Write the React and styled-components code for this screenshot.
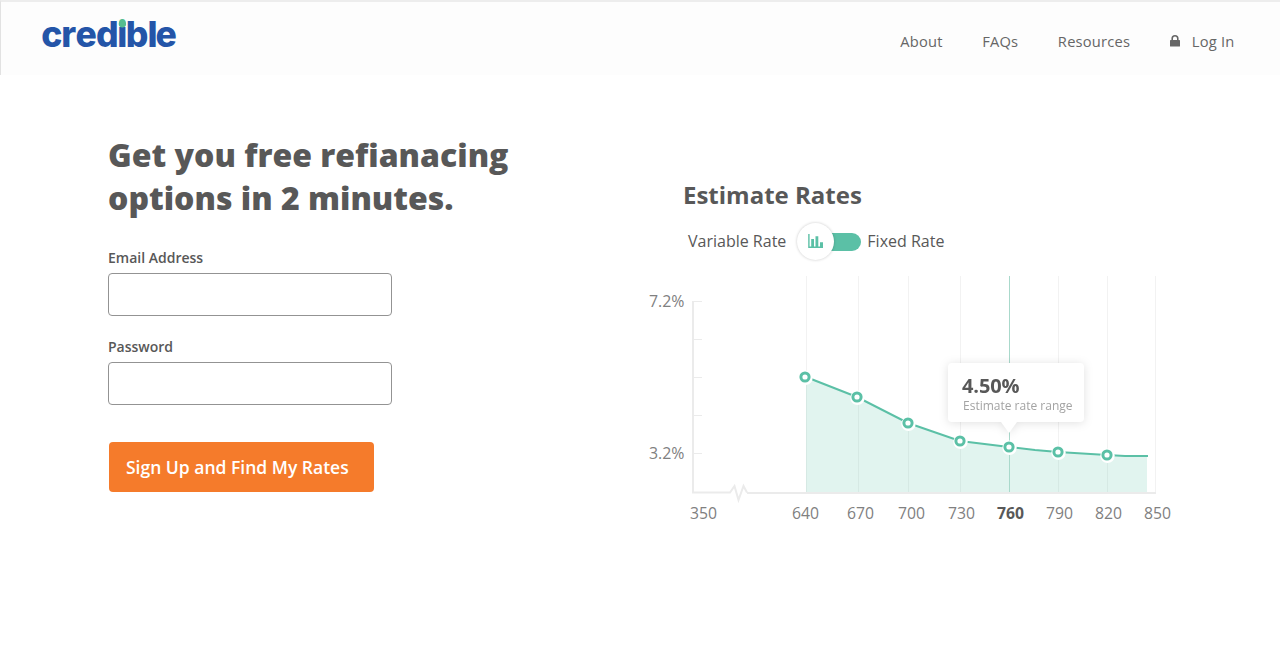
import React from "react";
import styled, { createGlobalStyle } from "styled-components";

const GlobalStyle = createGlobalStyle`
  * { box-sizing: border-box; }
  body { margin: 0; background: #fff; color: #585858; font-family: "Open Sans", sans-serif; }
`;

const Page = styled.div`
  height: 672px;
  overflow: hidden;
`;

const Header = styled.header`
  height: 75px;
  display: flex;
  justify-content: space-between;
  padding: 0 45.5px 0 41px;
  background: #fdfdfd;
  border-top: 2px solid #ededed;
  border-left: 1px solid #e2e2e2;
`;

const Logo = styled.svg`
  display: block;
  width: 150px;
  height: 60px;
  font: 800 35.5px Inter, sans-serif;
`;

const Nav = styled.nav`
  display: flex;
  height: 78px;
  align-items: center;
  gap: 39.5px;
`;

const NavLink = styled.a`
  display: flex;
  align-items: center;
  font-size: 14.7px;
  letter-spacing: 0.22px;
  color: #666;
  svg { margin-right: 12px; }
`;

const Main = styled.main`
  display: flex;
  padding-left: 108px;
`;

const SignUp = styled.form`
  width: 532px;
  padding-top: 58px;
  display: flex;
  flex-direction: column;
  align-items: flex-start;
`;

const Title = styled.h1`
  margin: 0 0 29px;
  font-size: 32px;
  font-weight: 800;
  line-height: 43px;
  white-space: nowrap;
`;

const Field = styled.label`
  display: block;
  margin-bottom: 21px;
  font-size: 14px;
  line-height: 20px;
  font-weight: 600;
`;

const Input = styled.input`
  display: block;
  width: 284px;
  height: 43px;
  margin-top: 5px;
  border: 1px solid #939393;
  border-radius: 4px;
  background: #fff;
`;

const Submit = styled.button`
  width: 265px;
  height: 50px;
  margin: 16px 0 0 1px;
  padding: 0 0 0 17px;
  border: 0;
  border-radius: 4px;
  background: #f57b2b;
  color: #fff;
  font: 600 17.5px "Open Sans", sans-serif;
  text-align: left;
`;

const Rates = styled.section`
  width: 560px;
  padding-top: 102px;
`;

const RatesTitle = styled.h2`
  margin: 0 0 8px 43px;
  font-size: 24px;
  line-height: 36px;
  font-weight: 700;
`;

const RateSwitch = styled.div`
  display: flex;
  align-items: center;
  height: 40px;
  margin-left: 48px;
  font-size: 16px;
`;

const Toggle = styled.div`
  display: flex;
  align-items: center;
  width: 64px;
  height: 40px;
  margin: 0 6px 0 11px;
`;

const Knob = styled.div`
  display: flex;
  align-items: center;
  justify-content: center;
  flex: none;
  width: 37px;
  height: 37px;
  border-radius: 50%;
  background: #fff;
  box-shadow: 0 0 3px rgba(0, 0, 0, 0.22);
  z-index: 1;
`;

const Track = styled.div`
  width: 32px;
  height: 18px;
  flex: none;
  margin: 1px 0 0 -5px;
  border-radius: 0 9px 9px 0;
  background: #5bc0a6;
`;

const ChartBox = styled.div`
  position: relative;
  width: 540px;
  height: 270px;
  margin-top: 9px;
`;

const ChartSvg = styled.svg`
  display: block;
  font-size: 16px;
  fill: #808080;
`;

const Tooltip = styled.div`
  position: absolute;
  left: 308px;
  top: 93px;
  width: 136px;
  height: 59px;
  padding: 10px 0 0 14px;
  border-radius: 4px;
  background: #fff;
  filter: drop-shadow(0 1px 5px rgba(0, 0, 0, 0.12));
  white-space: nowrap;
  &::after {
    content: "";
    position: absolute;
    left: 53px;
    top: 59px;
    border: 8px solid transparent;
    border-top: 11px solid #fff;
    border-bottom: 0;
  }
`;

const TipValue = styled.div`
  font-size: 20px;
  line-height: 26px;
  font-weight: 700;
  letter-spacing: -0.1px;
`;

const TipNote = styled.div`
  padding-left: 1px;
  font-size: 12px;
  line-height: 14px;
  color: #a3a3a3;
`;

const POINTS = [
  [165, 107],
  [217, 127],
  [268, 153],
  [320, 171],
  [369, 177],
  [418, 182],
  [467, 185],
];
const GRID = [166.5, 218.5, 268.5, 320.5, 418.5, 467.5, 515.5];
const TICKS = [31.5, 69.5, 107.5, 145.5, 183.5];
const LABELS = [
  [50, 350],
  [152, 640],
  [207, 670],
  [258, 700],
  [308, 730],
  [357, 760],
  [406, 790],
  [455, 820],
  [504, 850],
];
const CURVE = "166,107 217,127 268,153 320,171 369,177 395,180 418,182 467,185 485,186 507,186";

function Chart() {
  return (
    <ChartSvg width="540" height="270">
      {GRID.map((x) => (
        <path key={x} d={`M${x} 6V222`} stroke="#f2f2f2" />
      ))}
      <polygon points={`${CURVE} 507,222 166,222`} fill="#5bc0a6" fillOpacity="0.18" />
      <path d="M369.5 6V222" stroke="#a9d9cb" />
      <path d="M53 31V223M52 222.5H90L94.5 216L98.5 230L103.5 216L107 222.5M107 223H516" fill="none" stroke="#ebebeb" strokeWidth="2" />
      {TICKS.map((y) => (
        <path key={y} d={`M54 ${y}H62`} stroke="#ebebeb" />
      ))}
      <polyline points={`${CURVE} 508,186`} fill="none" stroke="#5bc0a6" strokeWidth="2" />
      {POINTS.map(([x, y]) => (
        <g key={x}>
          <circle cx={x + 0.5} cy={y + 0.8} r="7.2" fill="#fff" />
          <circle cx={x} cy={y} r="4.1" fill="#fff" stroke="#5bc0a6" strokeWidth="3" />
        </g>
      ))}
      <text x="9" y="37" textLength="35.5" lengthAdjust="spacingAndGlyphs">7.2%</text>
      <text x="9" y="189" textLength="35.5" lengthAdjust="spacingAndGlyphs">3.2%</text>
      {LABELS.map(([x, n]) => (
        <text
          key={n}
          x={x}
          y="249"
          textLength="27"
          lengthAdjust="spacingAndGlyphs"
          fontWeight={n === 760 ? 700 : 400}
          fill={n === 760 ? "#585858" : undefined}
        >
          {n}
        </text>
      ))}
    </ChartSvg>
  );
}

export default function App() {
  return (
    <Page>
      <GlobalStyle />
      <Header>
        <Logo viewBox="0 0 150 60">
          <defs>
            <linearGradient id="dot" gradientUnits="userSpaceOnUse" x1="0" y1="0" x2="0" y2="60">
              <stop offset="0.42" stopColor="#55bd90" />
              <stop offset="0.42" stopColor="#2455a8" />
            </linearGradient>
          </defs>
          <text x="-0.8 19.3 33.4 54 75.3 83.7 105.5 113.6" y="45" fill="#2455a8">
            cred<tspan fill="url(#dot)">i</tspan>ble
          </text>
          <ellipse cx="80.4" cy="22" rx="3.7" ry="3.4" fill="#55bd90" />
        </Logo>
        <Nav>
          <NavLink>About</NavLink>
          <NavLink>FAQs</NavLink>
          <NavLink>Resources</NavLink>
          <NavLink>
            <svg width="10" height="12" viewBox="0 0 10 12">
              <path d="M2.2 6V3.6a2.8 2.8 0 0 1 5.6 0V6" fill="none" stroke="#666" strokeWidth="1.6" />
              <rect y="5" width="10" height="6.5" rx="0.6" fill="#666" />
            </svg>
            Log In
          </NavLink>
        </Nav>
      </Header>
      <Main>
        <SignUp>
          <Title>
            Get you free refianacing
            <br />
            options in 2 minutes.
          </Title>
          <Field>
            Email Address
            <Input type="email" />
          </Field>
          <Field>
            Password
            <Input type="password" />
          </Field>
          <Submit type="button">Sign Up and Find My Rates</Submit>
        </SignUp>
        <Rates>
          <RatesTitle>Estimate Rates</RatesTitle>
          <RateSwitch>
            Variable Rate
            <Toggle>
              <Knob>
                <svg width="16" height="14" viewBox="0 0 16 14" fill="#5bc0a6">
                  <path d="M0.2 0H1.6V12.4H3.2V5H6V12.4H7.5V2.2H10.3V12.4H12V8.2H15V14H0.2Z" />
                </svg>
              </Knob>
              <Track />
            </Toggle>
            Fixed Rate
          </RateSwitch>
          <ChartBox>
            <Chart />
            <Tooltip>
              <TipValue>4.50%</TipValue>
              <TipNote>Estimate rate range</TipNote>
            </Tooltip>
          </ChartBox>
        </Rates>
      </Main>
    </Page>
  );
}
